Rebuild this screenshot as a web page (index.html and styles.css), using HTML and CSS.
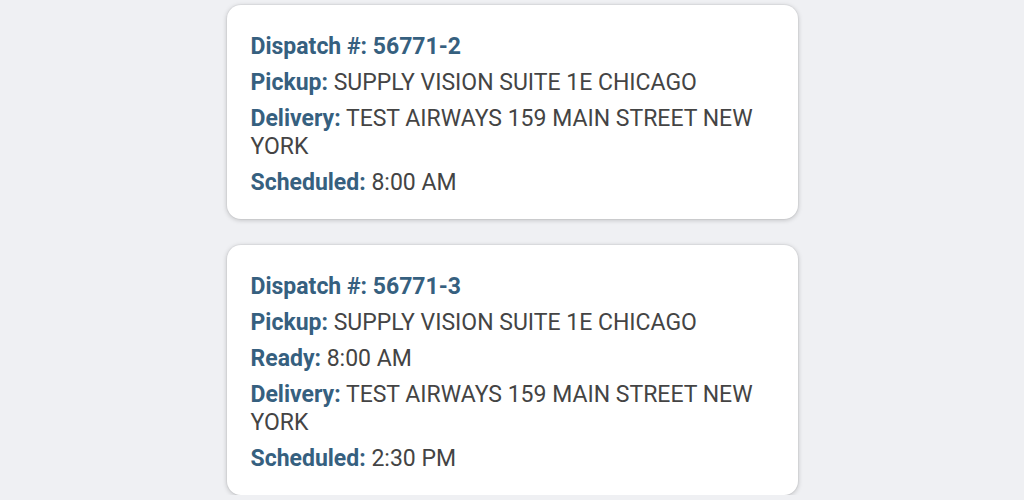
FILE: index.html
```html
<!DOCTYPE html>
<html lang="en">
<head>
  <meta charset="UTF-8">
  <title>Dispatches</title>
  <link rel="stylesheet" href="styles.css">
</head>
<body>

<main class="list">
  <div class="card">
    <div class="row title"><span class="label">Dispatch #:</span> 56771-2</div>
    <div class="row"><span class="label">Pickup:</span> SUPPLY VISION SUITE 1E CHICAGO</div>
    <div class="row"><span class="label">Delivery:</span> TEST AIRWAYS 159 MAIN STREET NEW YORK</div>
    <div class="row"><span class="label">Scheduled:</span> 8:00 AM</div>
  </div>

  <div class="card">
    <div class="row title"><span class="label">Dispatch #:</span> 56771-3</div>
    <div class="row"><span class="label">Pickup:</span> SUPPLY VISION SUITE 1E CHICAGO</div>
    <div class="row"><span class="label">Ready:</span> 8:00 AM</div>
    <div class="row"><span class="label">Delivery:</span> TEST AIRWAYS 159 MAIN STREET NEW YORK</div>
    <div class="row"><span class="label">Scheduled:</span> 2:30 PM</div>
  </div>
</main>

</body>
</html>
```

FILE: styles.css
```css
body {
  font-family: Roboto, "Noto Sans", sans-serif;
  background: #eff0f3;
  margin: 0;
  padding: 0;
}
.list {
  display: flex;
  flex-direction: column;
  align-items: center;
  gap: 26px;
  padding-top: 5px;
}
.card {
  width: 571px;
  box-sizing: border-box;
  background: #fff;
  border-radius: 14px;
  padding: 28px 24px 22px;
  box-shadow: 0 1px 5px rgba(0,0,0,0.22), 0 0 0 1px rgba(0,0,0,0.03);
  display: flex;
  flex-direction: column;
  gap: 8px;
}
.row {
  font-size: 23px;
  line-height: 28px;
  color: #444;
}
.label {
  color: #36607f;
  font-weight: bold;
}
.title {
  color: #36607f;
  font-weight: bold;
}
```
